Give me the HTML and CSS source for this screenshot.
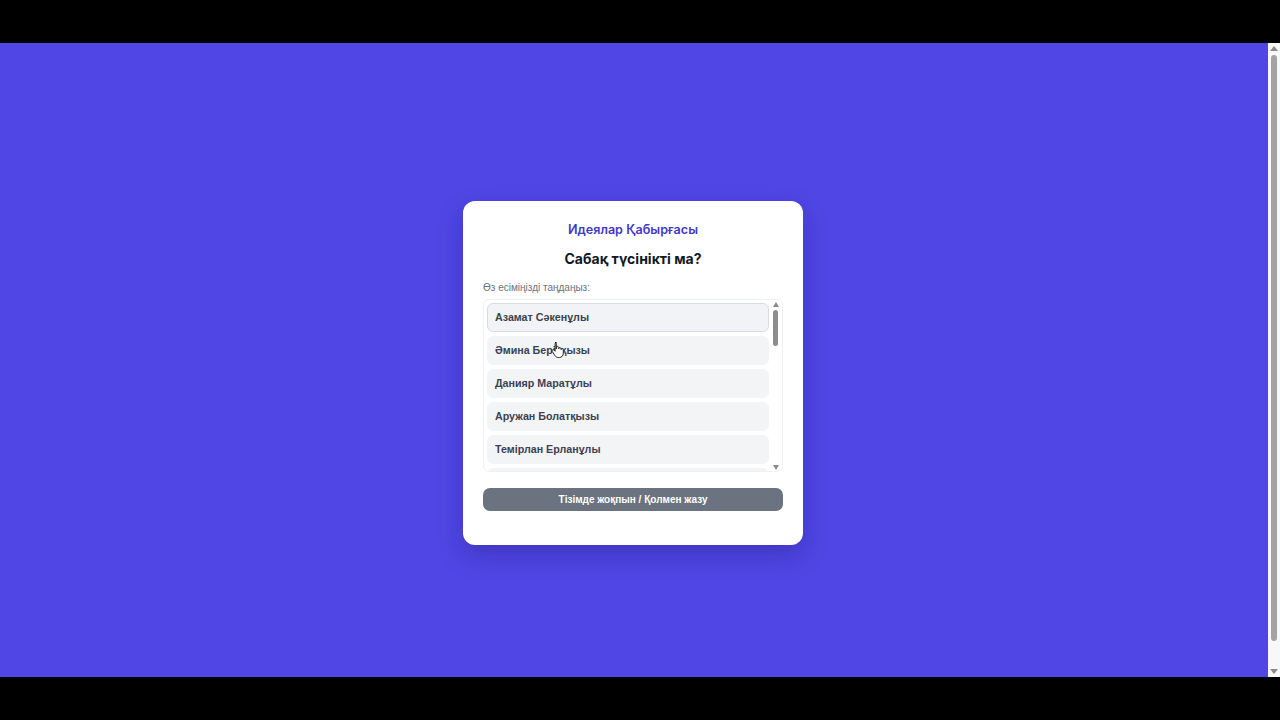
FILE: index.html
```html
<!DOCTYPE html>
<html lang="kk">
<head>
<meta charset="utf-8">
<title>Идеялар Қабырғасы</title>
<link rel="stylesheet" href="styles.css">
</head>
<body>
<div class="frame">
  <div class="letterbox"></div>
  <div class="screen">
    <main class="page">
      <section class="card">
        <h2 class="brand">Идеялар Қабырғасы</h2>
        <h1 class="question">Сабақ түсінікті ма?</h1>
        <p class="label">Өз есіміңізді таңдаңыз:</p>
        <div class="listbox">
          <ul class="names">
            <li class="name is-active">Азамат Сәкенұлы</li>
            <li class="name">Әмина Берікқызы</li>
            <li class="name">Данияр Маратұлы</li>
            <li class="name">Аружан Болатқызы</li>
            <li class="name">Темірлан Ерланұлы</li>
            <li class="name">Айгерім Нұрланқызы</li>
          </ul>
          <div class="mini-scroll">
            <span class="arrow up"></span>
            <span class="mini-thumb"></span>
            <span class="mini-space"></span>
            <span class="arrow down"></span>
          </div>
        </div>
        <button class="manual">Тізімде жоқпын / Қолмен жазу</button>
      </section>
      <svg class="cursor" width="14" height="17" viewBox="0 0 14 17">
        <path d="M4 1.5c.8 0 1.3.6 1.3 1.3v5.2V6.6c0-.7.5-1.2 1.2-1.2s1.2.5 1.2 1.2v1.2c0-.7.5-1.2 1.2-1.2s1.2.5 1.2 1.2v.8c0-.6.5-1.1 1.1-1.1s1.1.5 1.1 1.1v3.6c0 2.4-1.6 4.3-4 4.3H7.2c-1.3 0-2.3-.6-3-1.6L1.3 10.5c-.4-.6-.2-1.3.4-1.6.5-.3 1.1-.2 1.5.3l.9 1.1V2.8c0-.7.5-1.3 1.3-1.3z" fill="#fff" stroke="#111" stroke-width="0.9" stroke-linejoin="round"/>
      </svg>
    </main>
    <div class="vscroll">
      <span class="arrow up big"></span>
      <span class="thumb"></span>
      <span class="arrow down big"></span>
    </div>
  </div>
  <div class="letterbox"></div>
</div>
</body>
</html>
```

FILE: styles.css
```css
* { box-sizing: border-box; }
html, body { margin: 0; padding: 0; }
body { background: #000; font-family: "Liberation Sans", Arial, sans-serif; }

.frame { width: 1280px; height: 720px; display: flex; flex-direction: column; }
.letterbox { height: 43px; background: #000; flex: none; }
.screen { height: 634px; display: flex; flex: none; }

.page {
  flex: 1;
  background: #4f46e5;
  display: flex;
  justify-content: center;
  align-items: flex-start;
  padding: 158px 2px 0 0;
  position: relative;
}

.card {
  width: 340px;
  background: #fff;
  border-radius: 12px;
  padding: 21px 20px 20px;
  box-shadow: 0 10px 25px rgba(20, 10, 80, 0.25);
  text-align: center;
}

.brand {
  margin: 0;
  font-family: Inter, "Noto Sans", sans-serif;
  font-size: 12.6px;
  line-height: 16px;
  font-weight: 600;
  color: #4338ca;
}

.question {
  margin: 11px 0 0;
  font-family: Inter, "Noto Sans", sans-serif;
  font-size: 14px;
  line-height: 20px;
  font-weight: 700;
  color: #111827;
}

.label {
  margin: 12px 0 5px;
  text-align: left;
  font-size: 10px;
  line-height: 13px;
  color: #6b7280;
}

.listbox {
  height: 173px;
  border: 1px solid #eef0f3;
  border-radius: 6px;
  display: flex;
  overflow: hidden;
}

.names {
  list-style: none;
  margin: 0;
  padding: 3px 0 0 3px;
  flex: 1;
  overflow: hidden;
}

.name {
  height: 29px;
  margin-bottom: 4px;
  padding: 0 0 1px 7px;
  display: flex;
  align-items: center;
  text-align: left;
  font-size: 10.7px;
  font-weight: 700;
  color: #3b4250;
  background: #f3f4f6;
  border: 1px solid #f3f4f6;
  border-radius: 6px;
}

.name.is-active {
  background: #f1f3f6;
  border-color: #d8dce2;
}

.mini-scroll {
  width: 13px;
  display: flex;
  flex-direction: column;
  align-items: center;
  padding: 2px 0 1px;
}
.mini-thumb {
  width: 5px;
  height: 36px;
  margin-top: 3px;
  border-radius: 3px;
  background: #8d8d8d;
}
.mini-space { flex: 1; }

.arrow {
  width: 0;
  height: 0;
  border-left: 3.5px solid transparent;
  border-right: 3.5px solid transparent;
}
.arrow.up { border-bottom: 5px solid #8a8a8a; }
.arrow.down { border-top: 5px solid #8a8a8a; }

.manual {
  display: block;
  width: 100%;
  height: 23px;
  margin: 16px 0 14px;
  border: none;
  border-radius: 7px;
  background: #6b7280;
  color: #fff;
  font-family: "Liberation Sans", Arial, sans-serif;
  font-size: 10px;
  font-weight: 700;
}

.cursor {
  position: absolute;
  left: 551px;
  top: 298px;
}

.vscroll {
  width: 12px;
  background: #f8f8f8;
  display: flex;
  flex-direction: column;
  align-items: center;
  padding: 3px 0 3px;
}
.arrow.big { border-left-width: 4px; border-right-width: 4px; }
.arrow.big.up { border-bottom-width: 5px; }
.arrow.big.down { border-top-width: 5px; margin-top: auto; }
.thumb {
  width: 6px;
  height: 586px;
  margin: 4px 0;
  flex: none;
  border-radius: 3px;
  background: #a3a3a3;
}
```
